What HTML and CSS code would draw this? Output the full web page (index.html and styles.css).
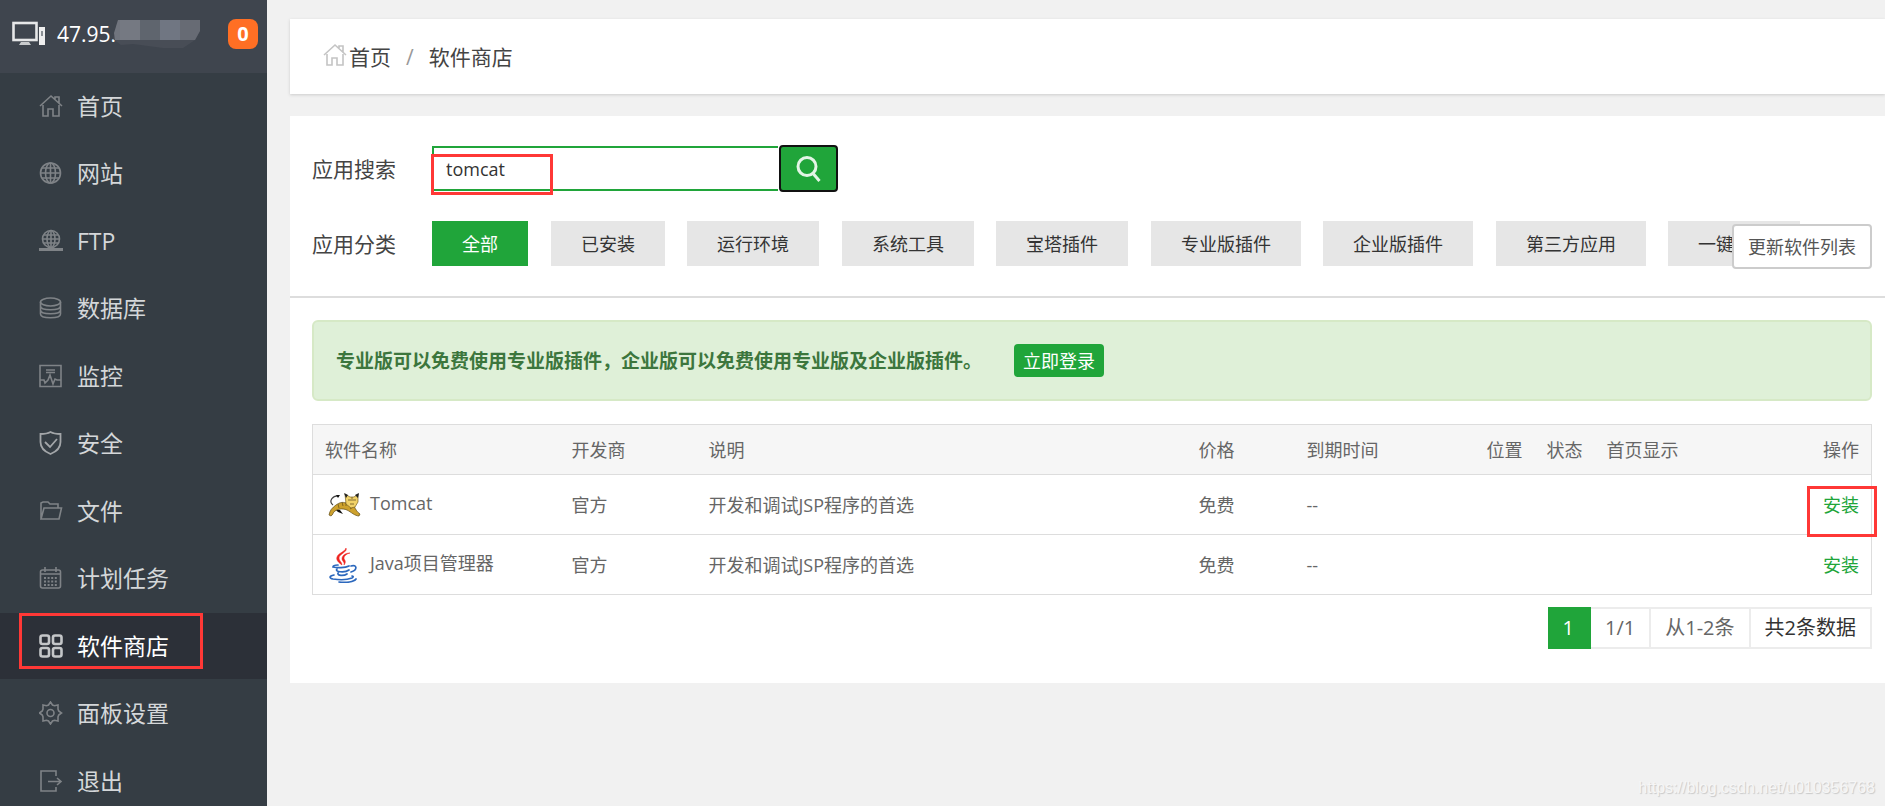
FILE: index.html
```html
<!DOCTYPE html>
<html lang="zh-CN">
<head>
<meta charset="utf-8">
<title>软件商店</title>
<link rel="stylesheet" href="styles.css">
</head>
<body>
<svg class="defs" aria-hidden="true">
  <symbol id="home" viewBox="0 0 24 24"><path d="M1 12 12 2l11 10M16 5V3h4v6M4 11v11h5v-7h5v7h6V11"/></symbol>
</svg>
<div class="app">
  <aside class="sidebar">
    <header class="host">
      <svg class="host-icon" viewBox="0 0 34 26">
        <rect x="1.5" y="2" width="23" height="17" fill="none" stroke="#e6e7e8" stroke-width="2.6"/>
        <path d="M9 21h8l2 3H7z" fill="#c9cbcd"/><rect x="27" y="6" width="6" height="18" fill="#eee"/>
        <path d="M29 10h2v5h-2z" fill="#8b9095"/>
      </svg>
      <span class="host-ip">47.95.</span>
      <svg class="host-mask" viewBox="0 0 88 30">
        <path d="M5 1H87v11l-5 9-12 8H50L20 25 8 26 0 20z" fill="#484d56"/>
        <path d="M5 1h21v20H2L1 14z" fill="#71757e"/><path d="M7 1h20v20H7z" fill="#757982"/><path d="M27 1h20v20H27z" fill="#5f656e"/>
        <path d="M47 1h20v20H47z" fill="#707682"/><path d="M67 1h20v11l-5 9H67z" fill="#676b74"/>
      </svg>
      <span class="badge">0</span>
    </header>
    <nav>
      <ul class="menu">
        <li><a href="#"><svg class="ico" viewBox="0 0 24 24"><use href="#home"/></svg>首页</a></li>
        <li><a href="#"><svg class="ico" viewBox="0 0 24 24"><circle cx="11.500" cy="12" r="10"/><ellipse cx="11.500" cy="12" rx="5" ry="10"/><path d="M11.500 2v20M1.500 12h20M3 7h17M3 17h17"/></svg>网站</a></li>
        <li><a href="#"><svg class="ico" viewBox="0 0 24 24"><circle cx="12" cy="10" r="8.500"/><ellipse cx="12" cy="10" rx="4" ry="8.500"/><path d="M12 2v17M4 10h16M5 6h14M5 14h14"/><path d="M0 20.500h24M9 20.500h6" stroke-width="3"/></svg>FTP</a></li>
        <li><a href="#"><svg class="ico" viewBox="0 0 24 24"><ellipse cx="11.500" cy="6" rx="10" ry="4"/><path d="M1.500 6v12c0 5 20 5 20 0V6M1.500 10c0 5 20 5 20 0M1.500 14c0 5 20 5 20 0"/></svg>数据库</a></li>
        <li><a href="#"><svg class="ico" viewBox="0 0 24 24"><path d="M1 1.500h21v21H1zM7 6h9M7 8.500h9M1 16h4l1 3 3-3 2-5 3 9 2-5 2 1h4"/></svg>监控</a></li>
        <li><a href="#"><svg class="ico bright" viewBox="0 0 24 24"><path d="M11.500 1C8 3 5 3 1.500 3v8c0 6 5 10 10 12 5-2 10-6 10-12V3C18 3 15 3 11.500 1zM6 11l5 5 7-8"/></svg>安全</a></li>
        <li><a href="#"><svg class="ico" viewBox="0 0 24 24"><path d="M2 20V4l2-1h5l2 2h8v4M2 20 5 9h17.500L20 20z"/></svg>文件</a></li>
        <li><a href="#"><svg class="ico" viewBox="0 0 24 24"><rect x="1.500" y="4" width="20" height="18" rx="2"/><path d="M6 1v5M17 1v5M1 8h21"/><path d="M5 12h13M5 15.500h13M5 19h13" stroke-width="2" stroke-dasharray="2 1.600"/></svg>计划任务</a></li>
        <li><a class="active" href="#" aria-current="page"><svg class="ico" viewBox="0 0 24 24"><rect x="1.500" y="1.500" width="8.500" height="8.500" rx="2"/><rect x="14" y="1.500" width="8.500" height="8.500" rx="2"/><rect x="1.500" y="14" width="8.500" height="8.500" rx="2"/><rect x="14" y="14" width="8.500" height="8.500" rx="2"/></svg>软件商店</a><span class="mark mark-menu"></span></li>
        <li><a href="#"><svg class="ico" viewBox="0 0 24 24"><path d="m9.500 4 2-3 2 3 2 .7L19 4l0 4 .7 2 2.800 2-2.800 2-.7 2 0 4-3.500-.7-2 .7-2 3-2-3-2-.7L4 20v-4l-.7-2L.5 12l2.800-2L4 8V4l3.500.7z"/><circle cx="11.500" cy="12" r="3.500"/></svg>面板设置</a></li>
        <li><a href="#"><svg class="ico" viewBox="0 0 24 24"><path d="M17 7V2H2v20h15v-4M9 12.500h12M18 9l4 3.500-4 3.500"/></svg>退出</a></li>
      </ul>
    </nav>
  </aside>

  <main class="content">
    <nav class="crumbs" aria-label="位置">
      <svg class="crumb-icon" viewBox="0 0 24 24"><use href="#home"/></svg>
      <a href="#">首页</a><span class="slash">/</span><span>软件商店</span>
    </nav>

    <section class="panel">
      <div class="filters">
        <form class="row">
          <label class="label" for="q">应用搜索</label>
          <input class="search-input" id="q" type="text" value="tomcat">
          <button class="search-btn" type="button" aria-label="搜索">
            <svg viewBox="0 0 26 28"><circle cx="11" cy="11.500" r="9" /><path d="m17.500 19 6 7"/></svg>
          </button>
          <span class="mark mark-search"></span>
        </form>
        <div class="row">
          <span class="label">应用分类</span>
          <div class="tags">
            <button class="tag on" type="button">全部</button>
            <button class="tag" type="button">已安装</button>
            <button class="tag" type="button">运行环境</button>
            <button class="tag" type="button">系统工具</button>
            <button class="tag" type="button">宝塔插件</button>
            <button class="tag" type="button">专业版插件</button>
            <button class="tag" type="button">企业版插件</button>
            <button class="tag" type="button">第三方应用</button>
            <button class="tag" type="button">一键部署</button>
          </div>
          <button class="update" type="button">更新软件列表</button>
        </div>
      </div>

      <div class="body">
        <div class="alert">
          <strong>专业版可以免费使用专业版插件，企业版可以免费使用专业版及企业版插件。</strong>
          <button class="login" type="button">立即登录</button>
        </div>

        <table class="soft">
          <colgroup><col class="c-name"><col class="c-dev"><col><col class="c-price"><col class="c-time"><col class="c-small"><col class="c-small"><col class="c-show"><col class="c-act"></colgroup>
          <thead>
            <tr><th>软件名称</th><th>开发商</th><th>说明</th><th>价格</th><th>到期时间</th><th>位置</th><th>状态</th><th>首页显示</th><th class="right">操作</th></tr>
          </thead>
          <tbody>
            <tr>
              <td><span class="name">
                <svg class="logo" viewBox="0 0 36 36">
                  <path d="M8 18C3 14 8 8 14 9" fill="none" stroke="#444" stroke-width="1.200"/>
                  <path d="M11 8h4l-2 3zM10 22l5 1 3 4-5-2z" fill="#111"/>
                  <path d="M4 28c1-5 3-7 7-10 4-3 7-3 10-2l8 3c2 4 3 6 6 8l-1 2c-4 0-8-4-12-6-5-2-9-1-12 1-2 1-2 4-4 5z" fill="#cda12d" stroke="#5e4a16" stroke-width=".7"/>
                  <path d="m13 17 1 4M17 15l1 4M21 15v4M25 22l3-2" stroke="#604b14" stroke-width=".7"/>
                  <path d="M20 7l5 3h4l4-3v8l-3 5-4 1-5-4z" fill="#f1d268" stroke="#7a6220" stroke-width=".7"/>
                  <path d="m19 6 4 2-2 3zM34 6l-4 2 3 3z" fill="#222"/>
                  <path d="M23 13h3m2 0h3m-6 4h4M27 10v4" stroke="#54441c" stroke-width=".7"/>
                </svg><span class="name-text">Tomcat</span></span></td>
              <td>官方</td><td>开发和调试JSP程序的首选</td><td>免费</td><td>--</td><td></td><td></td><td></td>
              <td class="right action"><a href="#">安装</a><span class="mark mark-install"></span></td>
            </tr>
            <tr>
              <td><span class="name">
                <svg class="logo" viewBox="0 0 36 36">
                  <path d="M21 1c2 4-7 6-7 10 0 3 3 4 3 7-4-3-6-5-5-8 1-4 8-5 9-9zM25 6c-4 1-6 3-6 5s3 3 0 7c1-3-2-4-2-6 0-4 4-6 8-6z" fill="#ee2420" stroke="#ee2420" stroke-width=".5"/>
                  <g fill="none" stroke="#2c68bd" stroke-width="1.700" stroke-linecap="round">
                    <path d="M13 18c-4 0-5 1-5 2 4 1 12 1 16-1M12 22c-3 3 8 4 12 1M13 26c-1 3 6 3 9 1M26 19c6-2 7 4 0 6M9 28c-5 1-5 3-1 4 6 1 14 1 19-1 2-1 1-2 0-2M14 35c7 1 15 0 17-3"/>
                  </g>
                </svg><span class="name-text">Java项目管理器</span></span></td>
              <td>官方</td><td>开发和调试JSP程序的首选</td><td>免费</td><td>--</td><td></td><td></td><td></td>
              <td class="right"><a href="#">安装</a></td>
            </tr>
          </tbody>
        </table>

        <div class="pager">
          <span class="page current">1</span><span class="page">1/1</span><span class="page">从1-2条</span><span class="page total">共2条数据</span>
        </div>
      </div>
    </section>
  </main>
</div>
<div class="watermark">https://blog.csdn.net/u010356768</div>
</body>
</html>
```

FILE: styles.css
```css
* { box-sizing: border-box; }

body {
  margin: 0;
  background: #f1f1f1;
  color: #666;
  font: 18px/24px "Open Sans", "Noto Sans CJK SC", sans-serif;
}

button, input { font: inherit; margin: 0; }
button { cursor: pointer; }
a { color: inherit; text-decoration: none; }

.defs { position: absolute; width: 0; height: 0; }

.app {
  display: flex;
  height: 100vh;
  overflow: hidden;
}

/* sidebar */
.sidebar {
  flex: none;
  width: 267px;
  background: #353d44;
}

.host {
  display: flex;
  align-items: center;
  height: 73px;
  padding: 0 9px 5px 12px;
  background: #3f454e;
  color: #fff;
  font-size: 21px;
}

.host-icon { width: 34px; height: 26px; margin-right: 11px; }
.host-mask { width: 88px; height: 30px; margin-left: -3px; }

.badge {
  width: 30px;
  margin-left: auto;
  border-radius: 8px;
  background: #ff6f24;
  font-size: 20px;
  font-weight: bold;
  line-height: 30px;
  text-align: center;
}

.menu {
  margin: 0;
  padding: 0;
  list-style: none;
}

.menu li { position: relative; height: 67px; }
.menu li:nth-child(even) { margin-bottom: 1px; }

.menu a {
  display: flex;
  align-items: center;
  gap: 14px;
  height: 66px;
  padding-left: 39px;
  color: #d4d7d9;
  font-size: 23px;
}

.menu .active { background: #2c3038; color: #fff; }

.ico, .crumb-icon {
  width: 24px;
  height: 24px;
  fill: none;
  stroke: #7f8387;
  stroke-width: 1.6;
}

.ico.bright { stroke: #a3a6a9; stroke-width: 1.8; }
.active .ico { stroke: #c4c6c8; stroke-width: 2.6; }

/* annotation frames */
.mark {
  position: absolute;
  border: 3px solid #ff3836;
  pointer-events: none;
}

.mark-menu { top: 0; left: 19px; width: 184px; height: 56px; }
.mark-search { top: 9px; left: 119px; width: 122px; height: 41px; }
.mark-install { top: 11px; right: -6px; width: 70px; height: 51px; }

/* content */
.content {
  flex: 1;
  min-width: 0;
  padding: 19px 0 0 23px;
}

.crumbs {
  display: flex;
  align-items: center;
  height: 75px;
  margin-bottom: 22px;
  padding: 0 33px;
  background: #fff;
  box-shadow: 0 1px 3px #ccc;
  color: #444;
  font-size: 21px;
}

.crumb-icon { margin: 0 2px 4px 0; stroke: #c4c4c4; }
.slash { margin: 0 15px; color: #999; }

.panel { background: #fff; }

.filters {
  display: flex;
  flex-direction: column;
  gap: 29px;
  padding: 29px 13px 30px 22px;
  border-bottom: 2px solid #ddd;
}

.row {
  position: relative;
  display: flex;
  align-items: center;
  margin: 0;
}

.label {
  flex: none;
  width: 120px;
  color: #444;
  font-size: 21px;
}

.search-input {
  width: 346px;
  height: 45px;
  padding: 0 12px;
  border: 2px solid #20a53a;
  border-right: 0;
  outline: 0;
  color: #333;
}

.search-btn {
  display: grid;
  place-items: center;
  width: 59px;
  height: 47px;
  margin-left: 1px;
  padding: 0;
  border: 2px solid #111;
  border-radius: 4px;
  background: #20a53a;
}

.search-btn svg {
  width: 26px;
  height: 28px;
  fill: none;
  stroke: #e3f5e6;
  stroke-width: 3;
}

.tags { display: flex; gap: 22px; }

.tag {
  flex: none;
  height: 45px;
  padding: 0 30px;
  border: 0;
  background: #e6e6e6;
  color: #333;
}

.tag:nth-child(even) { margin-left: 1px; }
.tag.on { background: #20a53a; color: #fff; }

.update {
  position: absolute;
  top: 3px;
  right: 0;
  height: 45px;
  padding: 0 14px;
  border: 2px solid #ccc;
  border-radius: 4px;
  background: #fff;
  color: #555;
}

.body { padding: 22px 13px 34px 22px; }

.alert {
  display: flex;
  align-items: center;
  gap: 32px;
  height: 81px;
  margin-bottom: 23px;
  padding: 0 22px;
  border: 2px solid #d6e9c6;
  border-radius: 6px;
  background: #dff0d8;
  color: #3c763d;
  font-size: 19px;
}

.login {
  height: 33px;
  padding: 0 9px;
  border: 0;
  border-radius: 4px;
  background: #20a53a;
  color: #fff;
  font-size: 18px;
}

.soft {
  width: 100%;
  border: 1px solid #ddd;
  border-collapse: collapse;
  table-layout: fixed;
}

.soft th, .soft td {
  padding: 0 12px;
  border-bottom: 1px solid #ddd;
  font-weight: normal;
  text-align: left;
  white-space: nowrap;
}

.soft th { height: 50px; background: #f6f6f6; }
.soft td { height: 60px; }
.soft .right { text-align: right; }
.soft .action { position: relative; }
.soft a { color: #20a53a; }

.c-name { width: 247px; }
.c-dev { width: 137px; }
.c-price { width: 108px; }
.c-time { width: 180px; }
.c-small { width: 60px; }
.c-show { width: 120px; }
.c-act { width: 157px; }

.name { display: flex; align-items: center; gap: 9px; }
.name-text { padding-bottom: 4px; }
.logo { width: 36px; height: 36px; }

.pager {
  display: flex;
  justify-content: flex-end;
  margin-top: 12px;
  font-size: 20px;
}

.page {
  height: 42px;
  padding: 0 14px;
  border: 2px solid #ececec;
  border-left: 0;
  line-height: 38px;
}

.page.current {
  padding: 0 15px;
  border-color: #20a53a;
  background: #20a53a;
  color: #fff;
}

.page.total { color: #333; }

.watermark {
  position: absolute;
  right: 10px;
  bottom: 6px;
  color: #f6f6f6;
  font: 16px/24px "Liberation Sans", sans-serif;
  text-shadow: 1px 1px 1px #c8c8c8;
}
```
